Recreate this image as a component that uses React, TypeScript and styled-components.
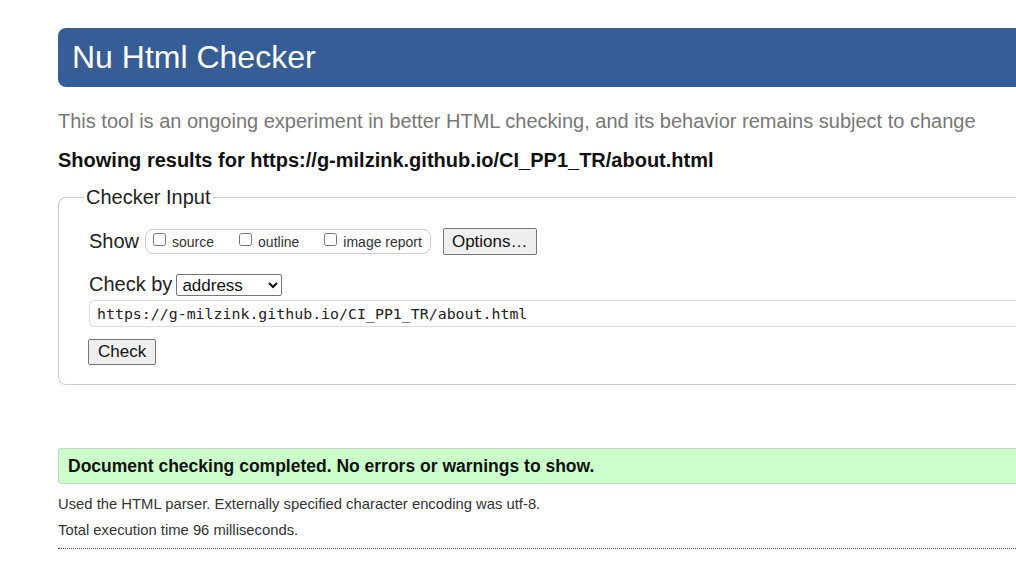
import styled, { createGlobalStyle } from "styled-components";

const GlobalStyle = createGlobalStyle`
  html, body {
    margin: 0;
    padding: 0;
    background: #fff;
    overflow: hidden;
  }
  body {
    font-family: "Liberation Sans", Arial, sans-serif;
    color: #222;
  }
`;

const Page = styled.div`
  width: 1200px;
  padding: 28px 0 0 58px;
  box-sizing: border-box;
`;

const Header = styled.h1`
  margin: 0;
  height: 59px;
  display: flex;
  align-items: center;
  padding-left: 14px;
  background: #365d95;
  color: #fff;
  font-size: 32px;
  font-weight: normal;
  border-radius: 8px 0 0 8px;
`;

const Intro = styled.p`
  margin: 22px 0 0;
  font-size: 20px;
  line-height: 24px;
  color: #777;
`;

const Results = styled.h2`
  margin: 15px 0 0;
  font-size: 20px;
  line-height: 24px;
  font-weight: bold;
  color: #111;
`;

const Fieldset = styled.fieldset`
  margin: 13px 0 0;
  padding: 6px 0 19px 30px;
  border: 1px solid #ccc;
  border-right: none;
  border-radius: 8px 0 0 8px;
`;

const Legend = styled.legend`
  margin-left: -5px;
  padding: 0 2px;
  font-size: 20px;
  line-height: 24px;
  color: #222;
`;

const Row = styled.div<{ $gap?: number }>`
  display: flex;
  align-items: center;
  gap: ${({ $gap }) => $gap ?? 6}px;
  font-size: 20px;
  color: #222;
`;

const CheckGroup = styled.span`
  display: inline-flex;
  align-items: center;
  height: 23px;
  padding: 0 8px 0 7px;
  border: 1px solid #ccc;
  border-radius: 8px;
  font-size: 14px;
  gap: 25px;
`;

const CheckLabel = styled.label`
  display: inline-flex;
  align-items: center;
  gap: 6px;
  color: #333;

  input {
    margin: 0;
    width: 13px;
    height: 13px;
    transform: translateY(-2px);
  }
`;

const Button = styled.button`
  font-family: "Liberation Sans", Arial, sans-serif;
  font-size: 17px;
  color: #111;
  height: 26px;
  padding: 0 9px;
  background: #efefef;
  border: 1px solid #767676;
  border-radius: 2px;
`;

const OptionsButton = styled(Button)`
  height: 27px;
  padding: 0 8px;
  margin-left: 6px;
`;

const Select = styled.select`
  font-family: "Liberation Sans", Arial, sans-serif;
  font-size: 17px;
  height: 22px;
  width: 106px;
  padding: 0 1px;
  color: #111;
  border: 1px solid #767676;
  border-radius: 2px;
  background: #fff;
`;

const UrlInput = styled.div`
  margin-top: 4px;
  height: 27px;
  box-sizing: border-box;
  display: flex;
  align-items: center;
  padding-left: 7px;
  border: 1px solid #ddd;
  border-right: none;
  border-radius: 6px 0 0 6px;
  font-family: "DejaVu Sans Mono", "Liberation Mono", monospace;
  font-size: 14.9px;
  color: #222;
`;

const Success = styled.div`
  margin-top: 63px;
  height: 36px;
  box-sizing: border-box;
  display: flex;
  align-items: center;
  padding-left: 9px;
  background: #ccffcc;
  border: 1px solid #c4d6c4;
  border-right: none;
  border-radius: 4px 0 0 4px;
  font-size: 17.5px;
  font-weight: bold;
  color: #111;
`;

const Note = styled.p<{ $first?: boolean }>`
  margin: ${({ $first }) => ($first ? "12px" : "9px")} 0 0;
  font-size: 14.8px;
  line-height: 17px;
  color: #333;
`;

const Rule = styled.hr`
  margin: 9px 0 0;
  border: none;
  border-top: 1px dotted #555;
`;

export default function App() {
  return (
    <>
      <GlobalStyle />
      <Page>
        <Header>Nu Html Checker</Header>
        <Intro>
          This tool is an ongoing experiment in better HTML checking, and its
          behavior remains subject to change
        </Intro>
        <Results>
          Showing results for https://g-milzink.github.io/CI_PP1_TR/about.html
        </Results>
        <Fieldset>
          <Legend>Checker Input</Legend>
          <Row style={{ marginTop: 13 }}>
            Show
            <CheckGroup>
              <CheckLabel>
                <input type="checkbox" /> source
              </CheckLabel>
              <CheckLabel>
                <input type="checkbox" /> outline
              </CheckLabel>
              <CheckLabel>
                <input type="checkbox" /> image report
              </CheckLabel>
            </CheckGroup>
            <OptionsButton>Options…</OptionsButton>
          </Row>
          <Row $gap={4} style={{ marginTop: 18 }}>
            Check by
            <Select defaultValue="address">
              <option value="address">address</option>
              <option value="file">file upload</option>
              <option value="text">text input</option>
            </Select>
          </Row>
          <UrlInput>https://g-milzink.github.io/CI_PP1_TR/about.html</UrlInput>
          <Row style={{ marginTop: 12 }}>
            <Button style={{ marginLeft: -1 }}>Check</Button>
          </Row>
        </Fieldset>
        <Success>Document checking completed. No errors or warnings to show.</Success>
        <Note $first>
          Used the HTML parser. Externally specified character encoding was
          utf-8.
        </Note>
        <Note>Total execution time 96 milliseconds.</Note>
        <Rule />
      </Page>
    </>
  );
}
